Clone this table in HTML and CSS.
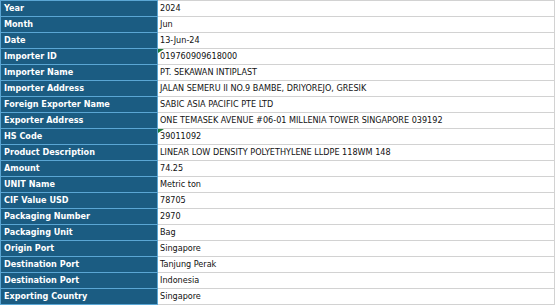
FILE: index.html
```html
<!DOCTYPE html>
<html>
<head>
<meta charset="utf-8">
<link rel="stylesheet" href="styles.css">
</head>
<body>
<table class="sheet">
<tbody>
<tr><th>Year</th><td>2024</td></tr>
<tr><th>Month</th><td>Jun</td></tr>
<tr><th>Date</th><td>13-Jun-24</td></tr>
<tr><th>Importer ID</th><td class="flag">019760909618000</td></tr>
<tr><th>Importer Name</th><td>PT. SEKAWAN INTIPLAST</td></tr>
<tr><th>Importer Address</th><td>JALAN SEMERU II NO.9 BAMBE, DRIYOREJO, GRESIK</td></tr>
<tr><th>Foreign Exporter Name</th><td>SABIC ASIA PACIFIC PTE LTD</td></tr>
<tr><th>Exporter Address</th><td>ONE TEMASEK AVENUE #06-01 MILLENIA TOWER SINGAPORE 039192</td></tr>
<tr><th>HS Code</th><td class="flag">39011092</td></tr>
<tr><th>Product Description</th><td>LINEAR LOW DENSITY POLYETHYLENE LLDPE 118WM 148</td></tr>
<tr><th>Amount</th><td>74.25</td></tr>
<tr><th>UNIT Name</th><td>Metric ton</td></tr>
<tr><th>CIF Value USD</th><td>78705</td></tr>
<tr><th>Packaging Number</th><td>2970</td></tr>
<tr><th>Packaging Unit</th><td>Bag</td></tr>
<tr><th>Origin Port</th><td>Singapore</td></tr>
<tr><th>Destination Port</th><td>Tanjung Perak</td></tr>
<tr><th>Destination Port</th><td>Indonesia</td></tr>
<tr><th>Exporting Country</th><td>Singapore</td></tr>
</tbody>
</table>
</body>
</html>
```
FILE: styles.css
```css
html, body {
  margin: 0;
  padding: 0;
  background: #ffffff;
}
.sheet {
  border-collapse: collapse;
  width: 555px;
  table-layout: fixed;
  font-family: "DejaVu Sans Condensed", "DejaVu Sans", sans-serif;
  font-size: 9px;
}
.sheet th {
  width: 153px;
  height: 15px;
  padding: 0 0 0 3px;
  background: #1b5c82;
  color: #ffffff;
  font-weight: bold;
  text-align: left;
  border: 1px solid #5aa6d4;
  line-height: 15px;
  white-space: nowrap;
}
.sheet td {
  height: 15px;
  padding: 0 0 0 2px;
  color: #111111;
  border-top: 1px solid #d2d2d2;
  border-bottom: 1px solid #d2d2d2;
  border-right: 1px solid #d2d2d2;
  line-height: 15px;
  white-space: nowrap;
  position: relative;
}
.sheet td.flag::before {
  content: "";
  position: absolute;
  left: 0;
  top: 0;
  border-top: 4px solid #1e7a3a;
  border-right: 6px solid transparent;
}
```
